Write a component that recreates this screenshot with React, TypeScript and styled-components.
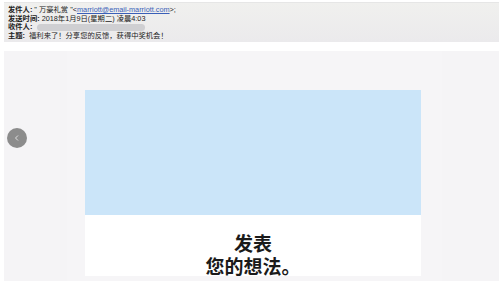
import React from "react";
import styled, { createGlobalStyle } from "styled-components";

const Global = createGlobalStyle`
  html, body { margin: 0; padding: 0; background: #ffffff; }
  body { font-family: "Liberation Sans", "Noto Sans CJK SC", sans-serif; }
`;

const Page = styled.div`
  width: 500px;
  height: 281px;
  box-sizing: border-box;
  padding: 2px 1px 0 4px;
  display: flex;
  flex-direction: column;
  gap: 9px;
  overflow: hidden;
`;

const Header = styled.div`
  height: 40px;
  flex: none;
  box-sizing: border-box;
  padding: 3px 0 0 4px;
  background: linear-gradient(#f0f0ee, #ebeaec);
  border-top: 1px solid #e6e6e6;
  display: flex;
  flex-direction: column;
`;

const Line = styled.div`
  height: 8.5px;
  flex: none;
  line-height: 8.5px;
  font-size: 7.3px;
  color: #222222;
  white-space: nowrap;
  display: flex;
  align-items: center;
`;

const Label = styled.b`
  font-weight: 700;
  margin-right: 2px;
`;

const Link = styled.span`
  color: #3a5fb8;
  text-decoration: underline;
`;

const Smudge = styled.i`
  display: block;
  flex: none;
  width: 108px;
  height: 7px;
  margin-left: 3px;
  border-radius: 4px;
  background-color: #cfcfd2;
`;

const Panel = styled.div`
  position: relative;
  flex: 1;
  background: #f5f4f6;
  display: flex;
`;

const Column = styled.div`
  margin-left: 63px;
  width: 375px;
  box-sizing: border-box;
  padding: 39px 0 0 18px;
  background: #f6f5f7;
`;

const Card = styled.div`
  width: 336px;
  display: flex;
  flex-direction: column;
`;

const Banner = styled.div`
  height: 125px;
  background: #cbe5f9;
`;

const Body = styled.div`
  height: 61px;
  box-sizing: border-box;
  background: #ffffff;
  padding-top: 16px;
  display: flex;
  flex-direction: column;
  align-items: center;
  font-family: "Noto Sans CJK SC", sans-serif;
  font-weight: 700;
  font-size: 19px;
  color: #1a1a1a;
`;

const BodyLine = styled.div`
  height: 23px;
  line-height: 23px;
`;

const Arrow = styled.div`
  position: absolute;
  left: 3px;
  top: 77px;
  width: 20px;
  height: 20px;
  border-radius: 50%;
  background: #8c8c8c;
  display: flex;
  align-items: center;
  justify-content: center;
`;

export default function App() {
  return (
    <>
      <Global />
      <Page>
        <Header>
          <Line>
            <Label>发件人:</Label>"&nbsp;万豪礼赏&nbsp;"&lt;<Link>marriott@email-marriott.com</Link>&gt;;
          </Line>
          <Line>
            <Label>发送时间:</Label>2018年1月9日(星期二) 凌晨4:03
          </Line>
          <Line>
            <Label>收件人:</Label>
            <Smudge />
          </Line>
          <Line>
            <Label>主题:</Label>&nbsp;福利来了！分享您的反馈，获得中奖机会！
          </Line>
        </Header>
        <Panel>
          <Arrow>
            <svg width="8" height="8" viewBox="0 0 8 8">
              <path d="M5 1.5 L2.5 4 L5 6.5" fill="none" stroke="#e8e8e8" strokeWidth="0.9" />
            </svg>
          </Arrow>
          <Column>
            <Card>
              <Banner />
              <Body>
                <BodyLine>发表</BodyLine>
                <BodyLine>您的想法。</BodyLine>
              </Body>
            </Card>
          </Column>
        </Panel>
      </Page>
    </>
  );
}
